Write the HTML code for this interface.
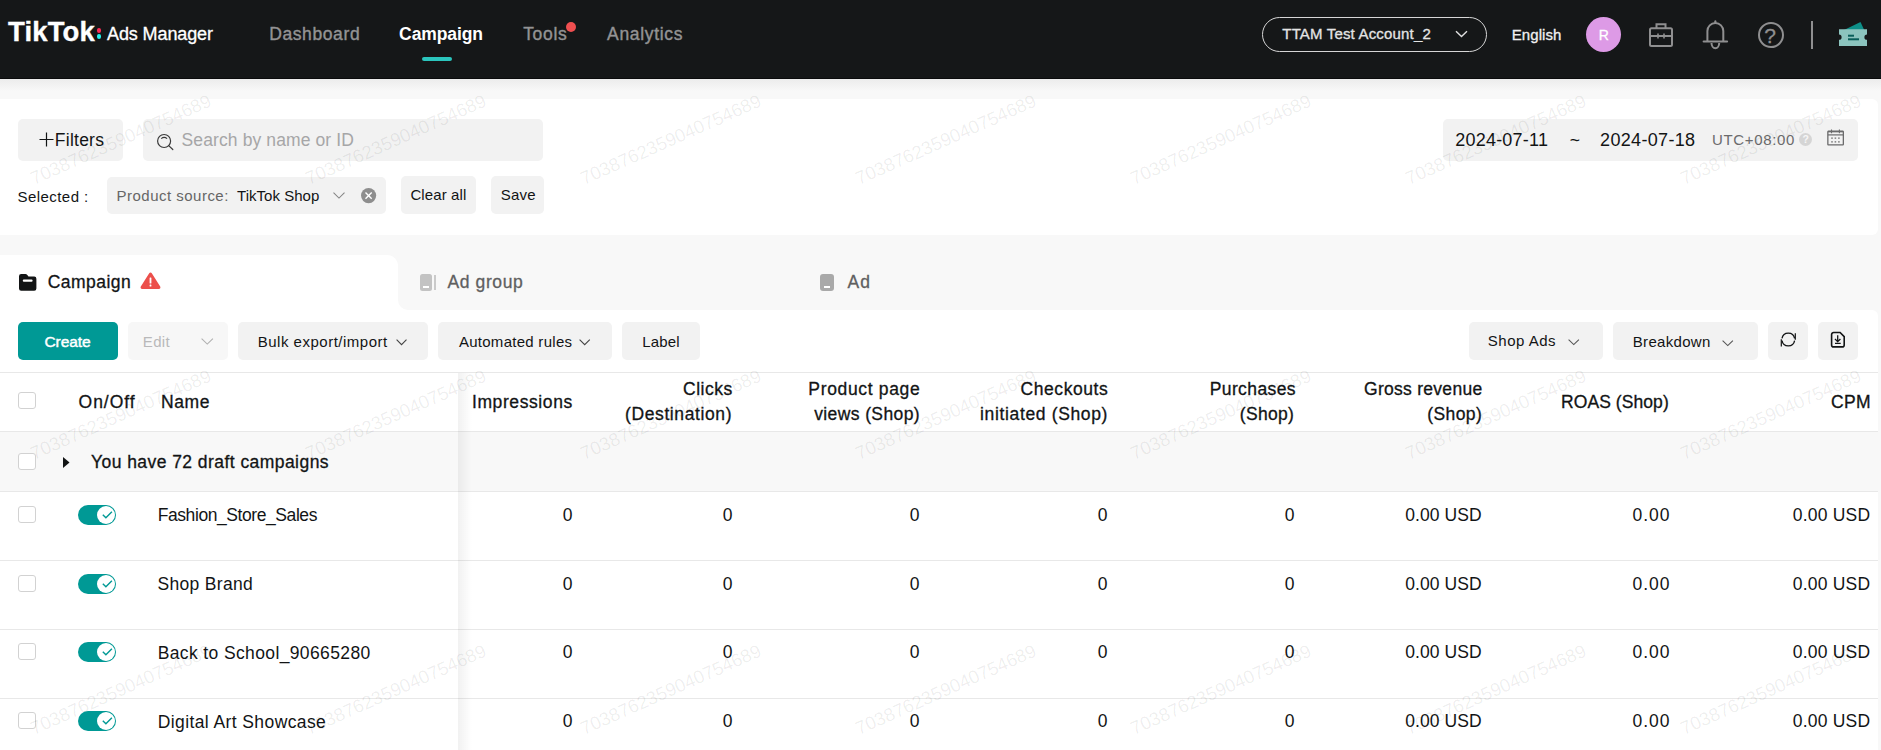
<!DOCTYPE html>
<html lang="en">
<head>
<meta charset="utf-8">
<title>TikTok Ads Manager - Campaign</title>
<style>
*{box-sizing:border-box;margin:0;padding:0}
html,body{width:1881px;height:750px;overflow:hidden}
body{background:#f8f8f8;font-family:"Liberation Sans",sans-serif;color:#121415;position:relative;font-size:15px}
.a{position:absolute;white-space:nowrap;line-height:1}
.m{-webkit-text-stroke:0.3px currentColor}
.wm{font-size:18.5px;color:rgba(0,0,0,0.07);-webkit-text-stroke:0.25px rgba(0,0,0,0.07);transform:translate(-50%,-50%) rotate(-24deg);pointer-events:none}
.cb{width:18px;height:17px;border:1px solid #d2d2d2;border-radius:3px;background:#fff}
svg{position:absolute;overflow:visible}
</style>
</head>
<body>
<div class="a" style="left:0px;top:0px;width:1881px;height:79px;background:#151718;border-bottom:1px solid #0a0b0c"></div>
<div class="a" style="left:0px;top:79px;width:1881px;height:12px;background:linear-gradient(#ececec,#f8f8f8);"></div>
<div class="a" id="t0" style="left:8.00px;top:17.72px;font-size:27.5px;color:#fff;font-weight:bold;letter-spacing:0.142px;-webkit-text-stroke:0.35px #fff;">TikTok</div>
<div class="a" style="left:96.9px;top:28.1px;width:4.5px;height:4.5px;background:#fe2c55;border-radius:50%"></div>
<div class="a" style="left:96.9px;top:34.3px;width:4.5px;height:4.5px;background:#25f4ee;border-radius:50%"></div>
<div class="a m" id="t1" style="left:107.00px;top:25.16px;font-size:18px;color:#fff;letter-spacing:-0.107px;">Ads Manager</div>
<div class="a" id="t2" style="left:269.20px;top:26.19px;font-size:17.5px;color:#959596;letter-spacing:0.603px;-webkit-text-stroke:0.4px #8f8f90;">Dashboard</div>
<div class="a" id="t3" style="left:399.10px;top:26.19px;font-size:17.5px;color:#fff;font-weight:bold;letter-spacing:-0.101px;">Campaign</div>
<div class="a" style="left:422px;top:57px;width:30px;height:4px;background:#2bc5bd;border-radius:2px"></div>
<div class="a" id="t4" style="left:523.20px;top:26.19px;font-size:17.5px;color:#959596;letter-spacing:0.674px;-webkit-text-stroke:0.4px #8f8f90;">Tools</div>
<div class="a" style="left:566px;top:21.9px;width:10.2px;height:10.2px;background:#ef4f50;border-radius:50%"></div>
<div class="a" id="t5" style="left:607.10px;top:26.19px;font-size:17.5px;color:#959596;letter-spacing:0.666px;-webkit-text-stroke:0.4px #8f8f90;">Analytics</div>
<div class="a" style="left:1262px;top:17px;width:225px;height:35px;background:transparent;border:1px solid #d6d6d6;border-radius:18px"></div>
<div class="a m" id="t6" style="left:1282.30px;top:26.30px;font-size:15px;color:#e4e4e4;letter-spacing:0.172px;">TTAM Test Account_2</div>
<svg style="left:1455px;top:30px" width="13" height="8" viewBox="0 0 13 8"><polyline points="1,1.2 6.5,6.6 12,1.2" fill="none" stroke="#e0e0e0" stroke-width="1.4"/></svg>
<div class="a m" id="t7" style="left:1511.80px;top:26.70px;font-size:15px;color:#f0f0f0;letter-spacing:0.058px;">English</div>
<div class="a" style="left:1586px;top:17px;width:35px;height:35px;background:#dd9ae6;border-radius:50%"></div>
<div class="a m" id="t8" style="left:1598.70px;top:27.75px;font-size:14px;color:#fff;">R</div>
<svg style="left:1648px;top:21px" width="26" height="28" viewBox="0 0 26 28" fill="none" stroke="#8f8f90" stroke-width="2">
<rect x="2" y="7.3" width="22" height="17.7" rx="1.5"/><path d="M8.5 7V3.2h9V7"/><path d="M2 15h22"/><path d="M10 12.5v5M16 12.5v5" stroke-width="1.6"/></svg>
<svg style="left:1701px;top:19px" width="30" height="32" viewBox="0 0 30 32" fill="none" stroke="#8f8f90" stroke-width="2">
<path d="M6.400 22.500V12a7.950 7.950 0 0 1 15.900 0V22.500"/><path d="M2.600 22.600h23.500" stroke-linecap="round"/><path d="M10.500 24a3.850 5.200 0 0 0 7.700 0"/><path d="M14.350 2.200v1.500" stroke-linecap="round"/></svg>
<div class="a" style="left:1758px;top:22px;width:26px;height:26px;background:transparent;border:2px solid #8f8f90;border-radius:50%"></div>
<div class="a m" id="t9" style="left:1764.25px;top:25.22px;font-size:21px;color:#8f8f90;">?</div>
<div class="a" style="left:1811px;top:21px;width:2px;height:28px;background:#8f8f90;"></div>
<svg style="left:1838px;top:21px" width="30" height="27" viewBox="0 0 30 27">
<path d="M5 9.5 L22.5 1 L26 8.5 L26 12 L5 12Z" fill="#0d8f88"/>
<path d="M1 8.2h28v5.4a2.6 2.6 0 0 0 0 5.2v6.2H1v-6.2a2.6 2.6 0 0 0 0-5.2z" fill="#8cc4be"/>
<rect x="10" y="13.7" width="6" height="2" fill="#0b5f5b"/><rect x="10" y="17.3" width="11" height="2" fill="#0b5f5b"/></svg>
<div class="a" style="left:0px;top:99px;width:1878px;height:136px;background:#fff;border-radius:0 6px 6px 0"></div>
<div class="a" style="left:18px;top:119px;width:105px;height:42px;background:#f2f2f2;border-radius:5px"></div>
<svg style="left:39.300px;top:131.900px" width="15" height="15" viewBox="0 0 15 15"><path d="M7.5 0.5v14M0.5 7.5h14" stroke="#121415" stroke-width="1.2" fill="none"/></svg>
<div class="a" id="t10" style="left:54.80px;top:132.19px;font-size:17.5px;color:#121415;letter-spacing:0.252px;">Filters</div>
<div class="a" style="left:143px;top:119px;width:400px;height:42px;background:#f2f2f2;border-radius:5px"></div>
<svg style="left:156px;top:133px" width="18" height="18" viewBox="0 0 18 18" fill="none" stroke="#3a3a3a" stroke-width="1.200">
<circle cx="8.100" cy="8" r="6.500"/><path d="M12.700 12.600l4.100 3.900" stroke-linecap="round"/><path d="M5.200 5.700Q8.200 3.100 11.100 5.700" stroke-width="1.100"/></svg>
<div class="a" id="t11" style="left:181.60px;top:132.19px;font-size:17.5px;color:#a6a6a7;letter-spacing:0.106px;">Search by name or ID</div>
<div class="a" style="left:1443px;top:119px;width:415px;height:42px;background:#f2f2f2;border-radius:5px"></div>
<div class="a" id="t12" style="left:1455.20px;top:130.96px;font-size:18px;color:#121415;letter-spacing:0.230px;">2024-07-11</div>
<div class="a" id="t13" style="left:1569.80px;top:131.79px;font-size:17.5px;color:#121415;">~</div>
<div class="a" id="t14" style="left:1600.10px;top:130.96px;font-size:18px;color:#121415;letter-spacing:0.326px;">2024-07-18</div>
<div class="a" id="t15" style="left:1711.90px;top:132.30px;font-size:15px;color:#6b6b6c;letter-spacing:0.665px;">UTC+08:00</div>
<div class="a" style="left:1799.1px;top:132.7px;width:13.2px;height:13.2px;background:#d5d5d5;border-radius:50%"></div>
<div class="a" id="t16" style="left:1802.40px;top:133.91px;font-size:10.5px;color:#f6f6f6;font-weight:bold;">?</div>
<svg style="left:1827px;top:128.500px" width="17" height="17.500" viewBox="0 0 17 17.500" fill="none" stroke="#6b6b6c" stroke-width="1.300">
<rect x="0.850" y="2.350" width="15.500" height="13.600" rx="0.600"/><path d="M0.850 5.900h15.500" stroke-width="1.200"/><path d="M0.850 2.500h15.500" stroke-width="1.700"/><path d="M4.500 0.600v3.700M12.400 0.600v3.700" stroke-width="1.100"/>
<path d="M4.200 9.100h1.600M7.600 9.100h1.600M11.100 9.100h1.600M4.200 12.800h1.600M7.600 12.800h1.600M11.100 12.800h1.600" stroke-width="1.300"/></svg>
<div class="a" id="t17" style="left:17.60px;top:189.30px;font-size:15px;color:#121415;letter-spacing:0.429px;">Selected :</div>
<div class="a" style="left:107px;top:177px;width:279px;height:37px;background:#f2f2f2;border-radius:5px"></div>
<div class="a" id="t18" style="left:116.50px;top:188.30px;font-size:15px;color:#666;letter-spacing:0.487px;">Product source:</div>
<div class="a" id="t19" style="left:237.00px;top:188.30px;font-size:15px;color:#121415;letter-spacing:0.036px;">TikTok Shop</div>
<svg style="left:332.500px;top:191.800px" width="12" height="8" viewBox="0 0 12 8"><polyline points="0.500,0.700 6,6.100 11.500,0.700" fill="none" stroke="#858585" stroke-width="1.050"/></svg>
<svg style="left:360.700px;top:187.800px" width="15.200" height="15.200" viewBox="0 0 15.200 15.200"><circle cx="7.600" cy="7.600" r="7.600" fill="#8e8e8e"/><path d="M4.500 4.500l6.200 6.200M10.700 4.500L4.500 10.700" stroke="#fff" stroke-width="1.400" fill="none"/></svg>
<div class="a" style="left:401px;top:176px;width:75px;height:38px;background:#f2f2f2;border-radius:5px"></div>
<div class="a" id="t20" style="left:410.40px;top:187.30px;font-size:15px;color:#121415;letter-spacing:0.114px;">Clear all</div>
<div class="a" style="left:491px;top:176px;width:53px;height:38px;background:#f2f2f2;border-radius:5px"></div>
<div class="a" id="t21" style="left:500.80px;top:187.30px;font-size:15px;color:#121415;letter-spacing:0.184px;">Save</div>
<div class="a" style="left:0px;top:255px;width:398px;height:56px;background:#fff;border-radius:0 11px 0 0"></div>
<svg style="left:398px;top:300px" width="10" height="10" viewBox="0 0 10 10"><path d="M0 0v10h10A10 10 0 0 1 0 0z" fill="#fff"/></svg>
<svg style="left:18.8px;top:273.8px" width="17.4" height="16.8" viewBox="0 0 17.4 16.8"><path d="M0 2.2A2.2 2.2 0 0 1 2.2 0h4.2c.8 0 1.4.3 1.9.9l1.2 1.6h5.7a2.2 2.2 0 0 1 2.2 2.2v9.9a2.2 2.2 0 0 1-2.2 2.2H2.2A2.2 2.2 0 0 1 0 14.600z" fill="#121415"/><rect x="3.8" y="5.6" width="9.8" height="2.1" rx="1" fill="#fff"/></svg>
<div class="a m" id="t22" style="left:47.70px;top:273.69px;font-size:17.5px;color:#121415;letter-spacing:0.481px;">Campaign</div>
<svg style="left:139.6px;top:272.4px" width="21" height="17" viewBox="0 0 21 17"><path d="M9.2 1.2a1.5 1.5 0 0 1 2.6 0l8.4 13.400a1.5 1.500 0 0 1-1.300 2.300H2.100a1.500 1.500 0 0 1-1.300-2.300z" fill="#ec4f4b"/><rect x="9.600" y="5.600" width="1.800" height="5.800" rx="0.500" fill="#fff"/><rect x="9.600" y="12.600" width="1.800" height="1.900" rx="0.500" fill="#fff"/></svg>
<div class="a" style="left:420px;top:274.2px;width:11.8px;height:16.4px;background:#c3c3c3;border-radius:2.5px"></div>
<div class="a" style="left:422.9px;top:286.1px;width:6.2px;height:1.9px;background:#fff;"></div>
<div class="a" style="left:433.8px;top:275.2px;width:2px;height:14.4px;background:#cacaca;"></div>
<div class="a m" id="t23" style="left:447.40px;top:273.69px;font-size:17.5px;color:#5f5f60;letter-spacing:0.630px;">Ad group</div>
<div class="a" style="left:820.2px;top:273.6px;width:14.2px;height:17px;background:#a9a9a9;border-radius:3px"></div>
<div class="a" style="left:824.4px;top:286px;width:5.6px;height:1.9px;background:#fff;"></div>
<div class="a m" id="t24" style="left:847.40px;top:273.69px;font-size:17.5px;color:#5f5f60;letter-spacing:1.228px;">Ad</div>
<div class="a" style="left:0px;top:310px;width:1878px;height:440px;background:#fff;border-radius:0 6px 0 0"></div>
<div class="a" style="left:18px;top:322px;width:100px;height:38px;background:#04999a;border-radius:5px;background:#009995"></div>
<div class="a" id="t25" style="left:44.50px;top:334.28px;font-size:15.5px;color:#fff;letter-spacing:-0.080px;-webkit-text-stroke:0.45px #fff;">Create</div>
<div class="a" style="left:128px;top:322px;width:100px;height:38px;background:#f7f7f7;border-radius:5px"></div>
<div class="a" id="t26" style="left:142.80px;top:333.70px;font-size:15px;color:#b9b9ba;letter-spacing:0.340px;">Edit</div>
<svg style="left:201px;top:337.8px" width="12.5" height="7" viewBox="0 0 12.5 7"><polyline points="0.6,0.7 6.25,6.1 11.9,0.7" fill="none" stroke="#b0b0b0" stroke-width="1.1"/></svg>
<div class="a" style="left:238px;top:322px;width:190px;height:38px;background:#f2f2f2;border-radius:5px"></div>
<div class="a" id="t27" style="left:257.70px;top:333.70px;font-size:15px;color:#121415;letter-spacing:0.511px;">Bulk export/import</div>
<svg style="left:395.6px;top:338.8px" width="11.1" height="6.6" viewBox="0 0 11.1 6.6"><polyline points="0.6,0.7 5.55,5.699999999999999 10.5,0.7" fill="none" stroke="#444" stroke-width="1.1"/></svg>
<div class="a" style="left:438px;top:322px;width:174px;height:38px;background:#f2f2f2;border-radius:5px"></div>
<div class="a" id="t28" style="left:458.90px;top:333.70px;font-size:15px;color:#121415;letter-spacing:0.277px;">Automated rules</div>
<svg style="left:578.5px;top:338.8px" width="11.4" height="6.6" viewBox="0 0 11.4 6.6"><polyline points="0.6,0.7 5.7,5.699999999999999 10.8,0.7" fill="none" stroke="#444" stroke-width="1.1"/></svg>
<div class="a" style="left:622px;top:322px;width:78px;height:38px;background:#f2f2f2;border-radius:5px"></div>
<div class="a" id="t29" style="left:642.20px;top:333.70px;font-size:15px;color:#121415;letter-spacing:0.158px;">Label</div>
<div class="a" style="left:1469px;top:322px;width:134px;height:38px;background:#f2f2f2;border-radius:5px"></div>
<div class="a" id="t30" style="left:1487.80px;top:333.10px;font-size:15px;color:#121415;letter-spacing:0.493px;">Shop Ads</div>
<svg style="left:1568px;top:338.5px" width="11.5" height="6.5" viewBox="0 0 11.5 6.5"><polyline points="0.6,0.7 5.75,5.6 10.9,0.7" fill="none" stroke="#555" stroke-width="1.1"/></svg>
<div class="a" style="left:1613px;top:322px;width:145px;height:38px;background:#f2f2f2;border-radius:5px"></div>
<div class="a" id="t31" style="left:1632.80px;top:334.10px;font-size:15px;color:#121415;letter-spacing:0.312px;">Breakdown</div>
<svg style="left:1722.2px;top:339.5px" width="11.5" height="6.5" viewBox="0 0 11.5 6.5"><polyline points="0.6,0.7 5.75,5.6 10.9,0.7" fill="none" stroke="#555" stroke-width="1.1"/></svg>
<div class="a" style="left:1768px;top:322px;width:40px;height:38px;background:#f2f2f2;border-radius:5px"></div>
<svg style="left:1780px;top:331.5px" width="17" height="15" viewBox="0 0 17 15" fill="none" stroke="#121415" stroke-width="1.3">
<path d="M2 6.400A6.400 6.400 0 0 1 14.600 6.400"/><path d="M14.600 8.600A6.400 6.400 0 0 1 2 8.600"/><path d="M15.300 1.200v6.600M1.300 7.200v7.300" stroke-width="1.200"/></svg>
<div class="a" style="left:1818px;top:322px;width:40px;height:38px;background:#f2f2f2;border-radius:5px"></div>
<svg style="left:1830px;top:331px" width="16" height="18" viewBox="0 0 16 18" fill="none" stroke="#121415" stroke-width="1.600">
<path d="M3.600 1.500H10.100L14.200 5.600V13.900a2 2 0 0 1-2 2H3.600a2 2 0 0 1-2-2V3.500a2 2 0 0 1 2-2z"/><path d="M7.700 4.300v6.200M5 8l2.700 2.700L10.400 8M5 12.300h5.700" stroke-width="1.300"/></svg>
<div class="a" style="left:0px;top:372px;width:1878px;height:1px;background:#e8e8e8;"></div>
<div class="a" style="left:0px;top:431px;width:1878px;height:1px;background:#e8e8e8;"></div>
<div class="a" style="left:0px;top:432px;width:1878px;height:59px;background:#f8f8f8;"></div>
<div class="a" style="left:0px;top:491px;width:1878px;height:1px;background:#e8e8e8;"></div>
<div class="a" style="left:0px;top:560px;width:1878px;height:1px;background:#e8e8e8;"></div>
<div class="a" style="left:0px;top:629px;width:1878px;height:1px;background:#e8e8e8;"></div>
<div class="a" style="left:0px;top:698px;width:1878px;height:1px;background:#e8e8e8;"></div>
<div class="a" style="left:458px;top:373px;width:14px;height:377px;background:linear-gradient(90deg,rgba(0,0,0,0.055),rgba(0,0,0,0));"></div>
<div class="a cb" style="left:18px;top:392px"></div>
<div class="a m" id="t32" style="left:78.60px;top:394.09px;font-size:17.5px;color:#121415;letter-spacing:0.947px;">On/Off</div>
<div class="a m" id="t33" style="left:161.00px;top:394.09px;font-size:17.5px;color:#121415;letter-spacing:0.584px;">Name</div>
<div class="a m" id="t34" style="left:472.00px;top:393.79px;font-size:17.5px;color:#121415;letter-spacing:0.591px;">Impressions</div>
<div class="a m" id="t35" style="left:683.00px;top:381.19px;font-size:17.5px;color:#121415;letter-spacing:0.517px;">Clicks</div>
<div class="a m" id="t36" style="left:625.00px;top:406.19px;font-size:17.5px;color:#121415;letter-spacing:0.610px;">(Destination)</div>
<div class="a m" id="t37" style="left:808.30px;top:381.19px;font-size:17.5px;color:#121415;letter-spacing:0.666px;">Product page</div>
<div class="a m" id="t38" style="left:814.20px;top:406.19px;font-size:17.5px;color:#121415;letter-spacing:0.389px;">views (Shop)</div>
<div class="a m" id="t39" style="left:1020.60px;top:381.19px;font-size:17.5px;color:#121415;letter-spacing:0.559px;">Checkouts</div>
<div class="a m" id="t40" style="left:980.00px;top:406.19px;font-size:17.5px;color:#121415;letter-spacing:0.648px;">initiated (Shop)</div>
<div class="a m" id="t41" style="left:1209.70px;top:381.19px;font-size:17.5px;color:#121415;letter-spacing:0.396px;">Purchases</div>
<div class="a m" id="t42" style="left:1239.80px;top:406.19px;font-size:17.5px;color:#121415;letter-spacing:0.320px;">(Shop)</div>
<div class="a m" id="t43" style="left:1364.00px;top:381.19px;font-size:17.5px;color:#121415;letter-spacing:0.280px;">Gross revenue</div>
<div class="a m" id="t44" style="left:1427.30px;top:406.19px;font-size:17.5px;color:#121415;letter-spacing:0.380px;">(Shop)</div>
<div class="a m" id="t45" style="left:1561.00px;top:393.79px;font-size:17.5px;color:#121415;letter-spacing:0.075px;">ROAS (Shop)</div>
<div class="a m" id="t46" style="left:1831.00px;top:393.79px;font-size:17.5px;color:#121415;letter-spacing:0.395px;">CPM</div>
<div class="a cb" style="left:18px;top:453px"></div>
<svg style="left:63px;top:456.600px" width="6.500" height="11" viewBox="0 0 6.500 11"><path d="M0 0L6.500 5.500L0 11z" fill="#121415"/></svg>
<div class="a m" id="t47" style="left:91.00px;top:453.79px;font-size:17.5px;color:#121415;letter-spacing:0.443px;">You have 72 draft campaigns</div>
<div class="a cb" style="left:18px;top:506px"></div>
<div class="a" style="left:78px;top:505px;width:38.300px;height:20px;border-radius:10px;background:#009995"></div>
<div class="a" style="left:97.300px;top:506px;width:18px;height:18px;border-radius:50%;background:#fff"></div>
<svg style="left:101.500px;top:510.5px" width="11" height="8" viewBox="0 0 11 8"><polyline points="0.800,3.700 3.900,6.700 9.900,0.700" fill="none" stroke="#019995" stroke-width="1.400"/></svg>
<div class="a" id="t48" style="left:157.70px;top:506.69px;font-size:17.5px;color:#121415;letter-spacing:-0.421px;">Fashion_Store_Sales</div>
<div class="a" id="t49" style="left:562.80px;top:507.09px;font-size:17.5px;color:#121415;">0</div>
<div class="a" id="t50" style="left:722.80px;top:507.09px;font-size:17.5px;color:#121415;">0</div>
<div class="a" id="t51" style="left:909.80px;top:507.09px;font-size:17.5px;color:#121415;">0</div>
<div class="a" id="t52" style="left:1097.80px;top:507.09px;font-size:17.5px;color:#121415;">0</div>
<div class="a" id="t53" style="left:1284.80px;top:507.09px;font-size:17.5px;color:#121415;">0</div>
<div class="a" id="t54" style="left:1405.20px;top:507.09px;font-size:17.5px;color:#121415;letter-spacing:0.095px;">0.00 USD</div>
<div class="a" id="t55" style="left:1632.40px;top:507.09px;font-size:17.5px;color:#121415;letter-spacing:1.024px;">0.00</div>
<div class="a" id="t56" style="left:1792.80px;top:507.09px;font-size:17.5px;color:#121415;letter-spacing:0.195px;">0.00 USD</div>
<div class="a cb" style="left:18px;top:575px"></div>
<div class="a" style="left:78px;top:574px;width:38.300px;height:20px;border-radius:10px;background:#009995"></div>
<div class="a" style="left:97.300px;top:575px;width:18px;height:18px;border-radius:50%;background:#fff"></div>
<svg style="left:101.500px;top:579.5px" width="11" height="8" viewBox="0 0 11 8"><polyline points="0.800,3.700 3.900,6.700 9.900,0.700" fill="none" stroke="#019995" stroke-width="1.400"/></svg>
<div class="a" id="t57" style="left:157.40px;top:576.19px;font-size:17.5px;color:#121415;letter-spacing:0.322px;">Shop Brand</div>
<div class="a" id="t58" style="left:562.80px;top:576.09px;font-size:17.5px;color:#121415;">0</div>
<div class="a" id="t59" style="left:722.80px;top:576.09px;font-size:17.5px;color:#121415;">0</div>
<div class="a" id="t60" style="left:909.80px;top:576.09px;font-size:17.5px;color:#121415;">0</div>
<div class="a" id="t61" style="left:1097.80px;top:576.09px;font-size:17.5px;color:#121415;">0</div>
<div class="a" id="t62" style="left:1284.80px;top:576.09px;font-size:17.5px;color:#121415;">0</div>
<div class="a" id="t63" style="left:1405.20px;top:576.09px;font-size:17.5px;color:#121415;letter-spacing:0.095px;">0.00 USD</div>
<div class="a" id="t64" style="left:1632.40px;top:576.09px;font-size:17.5px;color:#121415;letter-spacing:1.024px;">0.00</div>
<div class="a" id="t65" style="left:1792.80px;top:576.09px;font-size:17.5px;color:#121415;letter-spacing:0.195px;">0.00 USD</div>
<div class="a cb" style="left:18px;top:643px"></div>
<div class="a" style="left:78px;top:642px;width:38.300px;height:20px;border-radius:10px;background:#009995"></div>
<div class="a" style="left:97.300px;top:643px;width:18px;height:18px;border-radius:50%;background:#fff"></div>
<svg style="left:101.500px;top:647.5px" width="11" height="8" viewBox="0 0 11 8"><polyline points="0.800,3.700 3.900,6.700 9.900,0.700" fill="none" stroke="#019995" stroke-width="1.400"/></svg>
<div class="a" id="t66" style="left:157.70px;top:644.69px;font-size:17.5px;color:#121415;letter-spacing:0.373px;">Back to School_90665280</div>
<div class="a" id="t67" style="left:562.80px;top:644.09px;font-size:17.5px;color:#121415;">0</div>
<div class="a" id="t68" style="left:722.80px;top:644.09px;font-size:17.5px;color:#121415;">0</div>
<div class="a" id="t69" style="left:909.80px;top:644.09px;font-size:17.5px;color:#121415;">0</div>
<div class="a" id="t70" style="left:1097.80px;top:644.09px;font-size:17.5px;color:#121415;">0</div>
<div class="a" id="t71" style="left:1284.80px;top:644.09px;font-size:17.5px;color:#121415;">0</div>
<div class="a" id="t72" style="left:1405.20px;top:644.09px;font-size:17.5px;color:#121415;letter-spacing:0.095px;">0.00 USD</div>
<div class="a" id="t73" style="left:1632.40px;top:644.09px;font-size:17.5px;color:#121415;letter-spacing:1.024px;">0.00</div>
<div class="a" id="t74" style="left:1792.80px;top:644.09px;font-size:17.5px;color:#121415;letter-spacing:0.195px;">0.00 USD</div>
<div class="a cb" style="left:18px;top:712px"></div>
<div class="a" style="left:78px;top:711px;width:38.300px;height:20px;border-radius:10px;background:#009995"></div>
<div class="a" style="left:97.300px;top:712px;width:18px;height:18px;border-radius:50%;background:#fff"></div>
<svg style="left:101.500px;top:716.5px" width="11" height="8" viewBox="0 0 11 8"><polyline points="0.800,3.700 3.900,6.700 9.900,0.700" fill="none" stroke="#019995" stroke-width="1.400"/></svg>
<div class="a" id="t75" style="left:157.70px;top:714.19px;font-size:17.5px;color:#121415;letter-spacing:0.404px;">Digital Art Showcase</div>
<div class="a" id="t76" style="left:562.80px;top:713.09px;font-size:17.5px;color:#121415;">0</div>
<div class="a" id="t77" style="left:722.80px;top:713.09px;font-size:17.5px;color:#121415;">0</div>
<div class="a" id="t78" style="left:909.80px;top:713.09px;font-size:17.5px;color:#121415;">0</div>
<div class="a" id="t79" style="left:1097.80px;top:713.09px;font-size:17.5px;color:#121415;">0</div>
<div class="a" id="t80" style="left:1284.80px;top:713.09px;font-size:17.5px;color:#121415;">0</div>
<div class="a" id="t81" style="left:1405.20px;top:713.09px;font-size:17.5px;color:#121415;letter-spacing:0.095px;">0.00 USD</div>
<div class="a" id="t82" style="left:1632.40px;top:713.09px;font-size:17.5px;color:#121415;letter-spacing:1.024px;">0.00</div>
<div class="a" id="t83" style="left:1792.80px;top:713.09px;font-size:17.5px;color:#121415;letter-spacing:0.195px;">0.00 USD</div>
<div class="a wm" style="left:121.3px;top:139.7px">7038762359040754689</div>
<div class="a wm" style="left:396.3px;top:139.7px">7038762359040754689</div>
<div class="a wm" style="left:671.3px;top:139.7px">7038762359040754689</div>
<div class="a wm" style="left:946.3px;top:139.7px">7038762359040754689</div>
<div class="a wm" style="left:1221.3px;top:139.7px">7038762359040754689</div>
<div class="a wm" style="left:1496.3px;top:139.7px">7038762359040754689</div>
<div class="a wm" style="left:1771.3px;top:139.7px">7038762359040754689</div>
<div class="a wm" style="left:121.3px;top:414.7px">7038762359040754689</div>
<div class="a wm" style="left:396.3px;top:414.7px">7038762359040754689</div>
<div class="a wm" style="left:671.3px;top:414.7px">7038762359040754689</div>
<div class="a wm" style="left:946.3px;top:414.7px">7038762359040754689</div>
<div class="a wm" style="left:1221.3px;top:414.7px">7038762359040754689</div>
<div class="a wm" style="left:1496.3px;top:414.7px">7038762359040754689</div>
<div class="a wm" style="left:1771.3px;top:414.7px">7038762359040754689</div>
<div class="a wm" style="left:121.3px;top:689.7px">7038762359040754689</div>
<div class="a wm" style="left:396.3px;top:689.7px">7038762359040754689</div>
<div class="a wm" style="left:671.3px;top:689.7px">7038762359040754689</div>
<div class="a wm" style="left:946.3px;top:689.7px">7038762359040754689</div>
<div class="a wm" style="left:1221.3px;top:689.7px">7038762359040754689</div>
<div class="a wm" style="left:1496.3px;top:689.7px">7038762359040754689</div>
<div class="a wm" style="left:1771.3px;top:689.7px">7038762359040754689</div>
</body>
</html>
